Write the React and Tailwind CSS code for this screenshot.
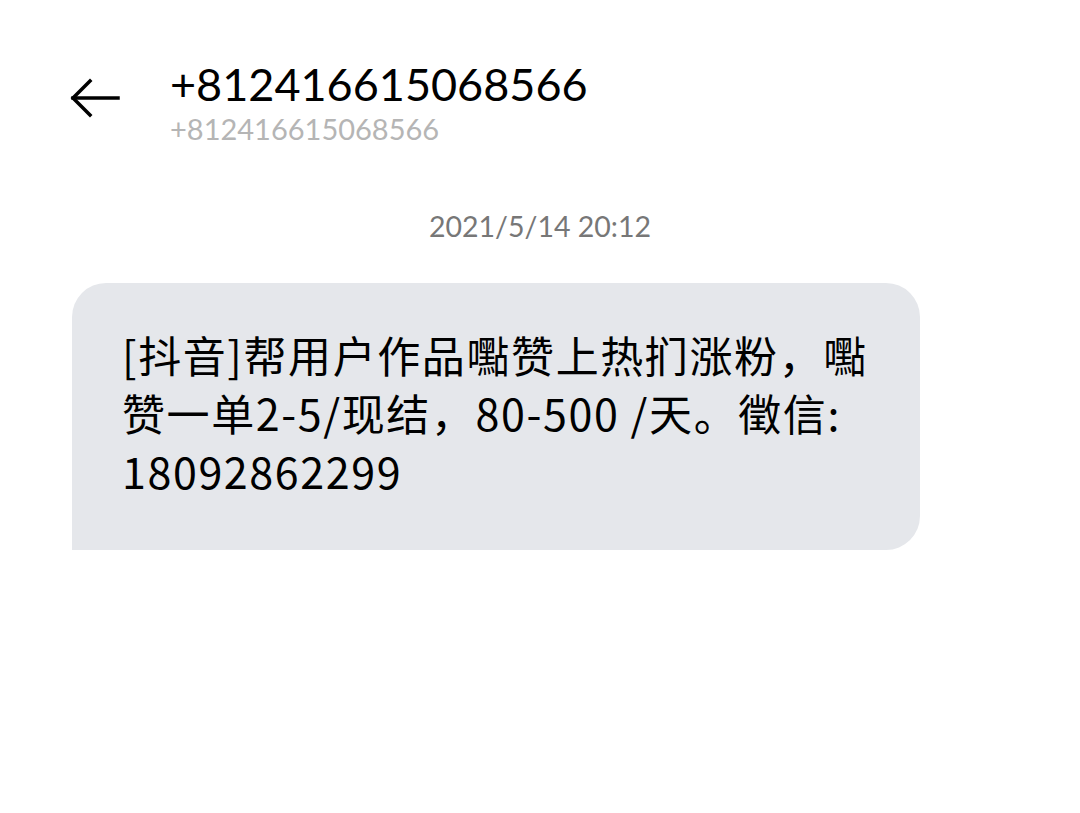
import React from "react";

export default function App() {
  return (
    <div className="w-[1080px] h-[813px] bg-white" style={{ fontFamily: "Lato, 'Noto Sans CJK SC', sans-serif" }}>
      <div className="flex items-start pt-[56px]">
        <div className="w-[170px] flex pl-[70px] pt-[22px]">
          <svg width="52" height="40" viewBox="0 0 52 40" fill="none" stroke="#000" strokeWidth="3.5" strokeLinecap="square">
            <path d="M3 20 H48" />
            <path d="M20 3 L3 20 L20 37" />
          </svg>
        </div>
        <div className="flex flex-col">
          <div className="text-[45px] leading-[56px] text-black">+812416615068566</div>
          <div className="text-[29px] leading-[34px] text-[#b5b5b5]">+812416615068566</div>
        </div>
      </div>
      <div className="mt-[63px] text-center text-[28.5px] leading-[34px] text-[#777]">2021/5/14 20:12</div>
      <div className="mt-[40px] ml-[72px] w-[848px] h-[267px] bg-[#e5e7eb] rounded-[34px] rounded-bl-none px-[50px] pt-[42px]">
        <div className="text-[43px] leading-[58px] tracking-[1.6px] text-black whitespace-nowrap" style={{ fontFamily: "'Noto Sans CJK SC', sans-serif" }}>
          <div>[抖音]帮用户作品嚸赞上热扪涨粉，嚸</div>
          <div>赞一单2-5/现结，80-500 /天。徵信:</div>
          <div>18092862299</div>
        </div>
      </div>
    </div>
  );
}
